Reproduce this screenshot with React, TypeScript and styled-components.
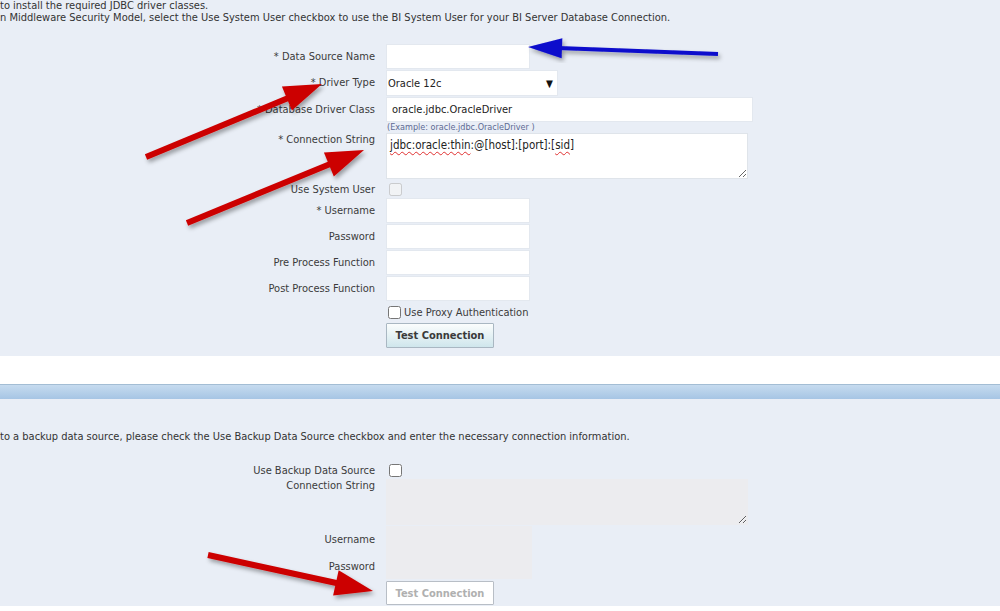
import React from "react";
import styled, { createGlobalStyle } from "styled-components";

const GlobalStyle = createGlobalStyle`
  html, body {
    margin: 0;
    padding: 0;
    background: #ffffff;
    font-family: "DejaVu Sans Condensed", "DejaVu Sans", Tahoma, sans-serif;
    color: #333333;
  }
  * { box-sizing: border-box; }
`;

interface arrowProps {
  x1: number;
  y1: number;
  x2: number;
  y2: number;
  color: string;
  shaft: number;
  headLen: number;
  headHalf: number;
}

const Arrow = ({ x1, y1, x2, y2, color, shaft, headLen, headHalf }: arrowProps) => {
  const dx = x2 - x1;
  const dy = y2 - y1;
  const len = Math.sqrt(dx * dx + dy * dy);
  const ux = dx / len;
  const uy = dy / len;
  const nx = -uy;
  const ny = ux;
  const bx = x2 - ux * headLen;
  const by = y2 - uy * headLen;
  const pts = [
    `${x2},${y2}`,
    `${bx + nx * headHalf},${by + ny * headHalf}`,
    `${bx - nx * headHalf},${by - ny * headHalf}`,
  ].join(" ");
  return (
    <g filter="url(#shadow)">
      <line x1={x1} y1={y1} x2={bx + ux * 4} y2={by + uy * 4} stroke={color} strokeWidth={shaft} />
      <polygon points={pts} fill={color} />
    </g>
  );
};

const App = () => {
  return (
    <Page>
      <GlobalStyle />
      <Panel>
        <Intro>
          <p>to install the required JDBC driver classes.</p>
          <p>
            n Middleware Security Model, select the Use System User checkbox to use the BI System User for your BI
            Server Database Connection.
          </p>
        </Intro>
        <Form>
          <Row>
            <Label>* Data Source Name</Label>
            <TextInput w={144} />
          </Row>
          <Row>
            <Label>* Driver Type</Label>
            <SelectBox>
              <span>Oracle 12c</span>
              <Caret>▼</Caret>
            </SelectBox>
          </Row>
          <Row>
            <Label>* Database Driver Class</Label>
            <TextInput w={367} defaultValue="oracle.jdbc.OracleDriver" />
          </Row>
          <HintRow>
            <Label />
            <Hint>(Example: oracle.jdbc.OracleDriver )</Hint>
          </HintRow>
          <Row top>
            <Label>* Connection String</Label>
            <TextArea>
              <Squiggle>jdbc:oracle:thin</Squiggle>:@[host]:[port]:[<Squiggle>sid</Squiggle>]
            </TextArea>
          </Row>
          <Row gap={3}>
            <Label>Use System User</Label>
            <Check type="checkbox" disabled />
          </Row>
          <Row>
            <Label>* Username</Label>
            <TextInput w={144} />
          </Row>
          <Row>
            <Label>Password</Label>
            <TextInput w={144} />
          </Row>
          <Row>
            <Label>Pre Process Function</Label>
            <TextInput w={144} />
          </Row>
          <Row>
            <Label>Post Process Function</Label>
            <TextInput w={144} />
          </Row>
          <Row gap={4}>
            <Label />
            <CheckLabel>
              <Check type="checkbox" />
              Use Proxy Authentication
            </CheckLabel>
          </Row>
          <Row gap={3}>
            <Label />
            <Button>Test Connection</Button>
          </Row>
        </Form>
      </Panel>
      <Band />
      <HeaderBar />
      <Panel bottom>
        <Intro spaced>
          <p>
            to a backup data source, please check the Use Backup Data Source checkbox and enter the necessary connection
            information.
          </p>
        </Intro>
        <Form>
          <Row>
            <Label>Use Backup Data Source</Label>
            <Check type="checkbox" />
          </Row>
          <Row top>
            <Label>Connection String</Label>
            <TextArea disabled />
          </Row>
          <Row>
            <Label>Username</Label>
            <TextInput w={146} h={28} disabled />
          </Row>
          <Row gap={0}>
            <Label>Password</Label>
            <TextInput w={146} h={25} disabled />
          </Row>
          <Row gap={2}>
            <Label />
            <Button disabled>Test Connection</Button>
          </Row>
        </Form>
      </Panel>
      <Overlay width="1000" height="611" viewBox="0 0 1000 611">
        <defs>
          <filter id="shadow" x="-20%" y="-20%" width="140%" height="140%">
            <feDropShadow dx="2" dy="3" stdDeviation="2" floodColor="#000" floodOpacity="0.35" />
          </filter>
        </defs>
        <Arrow x1={718} y1={54} x2={528} y2={47} color="#0a0acc" shaft={4} headLen={34} headHalf={10} />
        <Arrow x1={146} y1={157} x2={322} y2={84} color="#cc0000" shaft={6} headLen={38} headHalf={13} />
        <Arrow x1={187} y1={223} x2={364} y2={150} color="#cc0000" shaft={6} headLen={38} headHalf={13} />
        <Arrow x1={208} y1={555} x2={373} y2={591} color="#cc0000" shaft={6} headLen={38} headHalf={13} />
      </Overlay>
    </Page>
  );
};

const Page = styled.div`
  position: relative;
  width: 1000px;
  height: 611px;
  overflow: hidden;
  background: #ffffff;
`;

const Panel = styled.div<{ bottom?: boolean }>`
  background: #e9eef6;
  height: ${(props) => (props.bottom ? "207px" : "356px")};
  padding-top: ${(props) => (props.bottom ? "32px" : "0px")};
`;

const Intro = styled.div<{ spaced?: boolean }>`
  font-size: 11px;
  line-height: 12px;
  color: #333333;
  margin-bottom: 19px;

  p {
    margin: 0;
    white-space: nowrap;
  }
`;

const Form = styled.div`
  display: flex;
  flex-direction: column;
`;

const Row = styled.div<{ top?: boolean; gap?: number }>`
  display: flex;
  align-items: ${(props) => (props.top ? "flex-start" : "center")};
  column-gap: 11px;
  margin-top: ${(props) => (props.gap === undefined ? 1 : props.gap)}px;
`;

const HintRow = styled(Row)`
  margin-top: 0;
  height: 10px;
`;

const Label = styled.div`
  width: 375px;
  flex-shrink: 0;
  text-align: right;
  font-size: 11px;
  line-height: 14px;
  color: #3b3b3b;
  white-space: nowrap;
`;

const TextInput = styled.input<{ w: number; h?: number }>`
  width: ${(props) => props.w}px;
  height: ${(props) => props.h || 25}px;
  border: 1px solid #e3e8ef;
  background: #ffffff;
  padding: 0 5px;
  font-family: inherit;
  font-size: 11px;
  color: #222222;
  outline: none;

  &:disabled {
    background: #ececef;
    border-color: #ececef;
  }
`;

const SelectBox = styled.div`
  width: 172px;
  height: 26px;
  display: flex;
  align-items: center;
  justify-content: space-between;
  background: #ffffff;
  border: 1px solid #e3e8ef;
  padding: 0 4px 0 1px;
  font-size: 11px;
  color: #222222;
`;

const Caret = styled.span`
  font-size: 10px;
  color: #111111;
`;

const Hint = styled.div`
  font-size: 9px;
  line-height: 10px;
  color: #5d6a93;
  margin-left: 1px;
`;

const TextArea = styled.div<{ disabled?: boolean }>`
  width: 362px;
  height: 46px;
  background: ${(props) => (props.disabled ? "#ececef" : "#ffffff")};
  border: 1px solid ${(props) => (props.disabled ? "#ececef" : "#dfe4ea")};
  padding: 4px 3px;
  font-size: 11.5px;
  line-height: 14px;
  color: #222222;
  resize: both;
  overflow: hidden;
`;

const Squiggle = styled.span`
  text-decoration: underline wavy #e03030;
  text-decoration-thickness: 1px;
  text-underline-offset: 2px;
`;

const Check = styled.input`
  width: 13px;
  height: 13px;
  margin: 1px 3px 1px 3px;
`;

const CheckLabel = styled.label`
  display: flex;
  align-items: center;
  font-size: 11px;
  color: #3b3b3b;
  margin-left: -1px;

  input {
    margin-right: 3px;
  }
`;

const Button = styled.button`
  width: 108px;
  height: 25px;
  font-family: inherit;
  font-size: 11px;
  font-weight: bold;
  color: #3a3a3a;
  border: 1px solid #a9b7c2;
  border-radius: 1px;
  background: linear-gradient(#fbfdfd, #cfe6ec);
  padding: 0;

  &:disabled {
    height: 24px;
    color: #b0b0b0;
    background: #ffffff;
    border-color: #b8bec6;
  }
`;

const Band = styled.div`
  height: 28px;
  background: #ffffff;
`;

const HeaderBar = styled.div`
  height: 15px;
  border-top: 1px solid #a3bdd4;
  background: linear-gradient(#c6dbef, #a6c5e4);
`;

const Overlay = styled.svg`
  position: absolute;
  left: 0;
  top: 0;
  pointer-events: none;
`;

export default App;
